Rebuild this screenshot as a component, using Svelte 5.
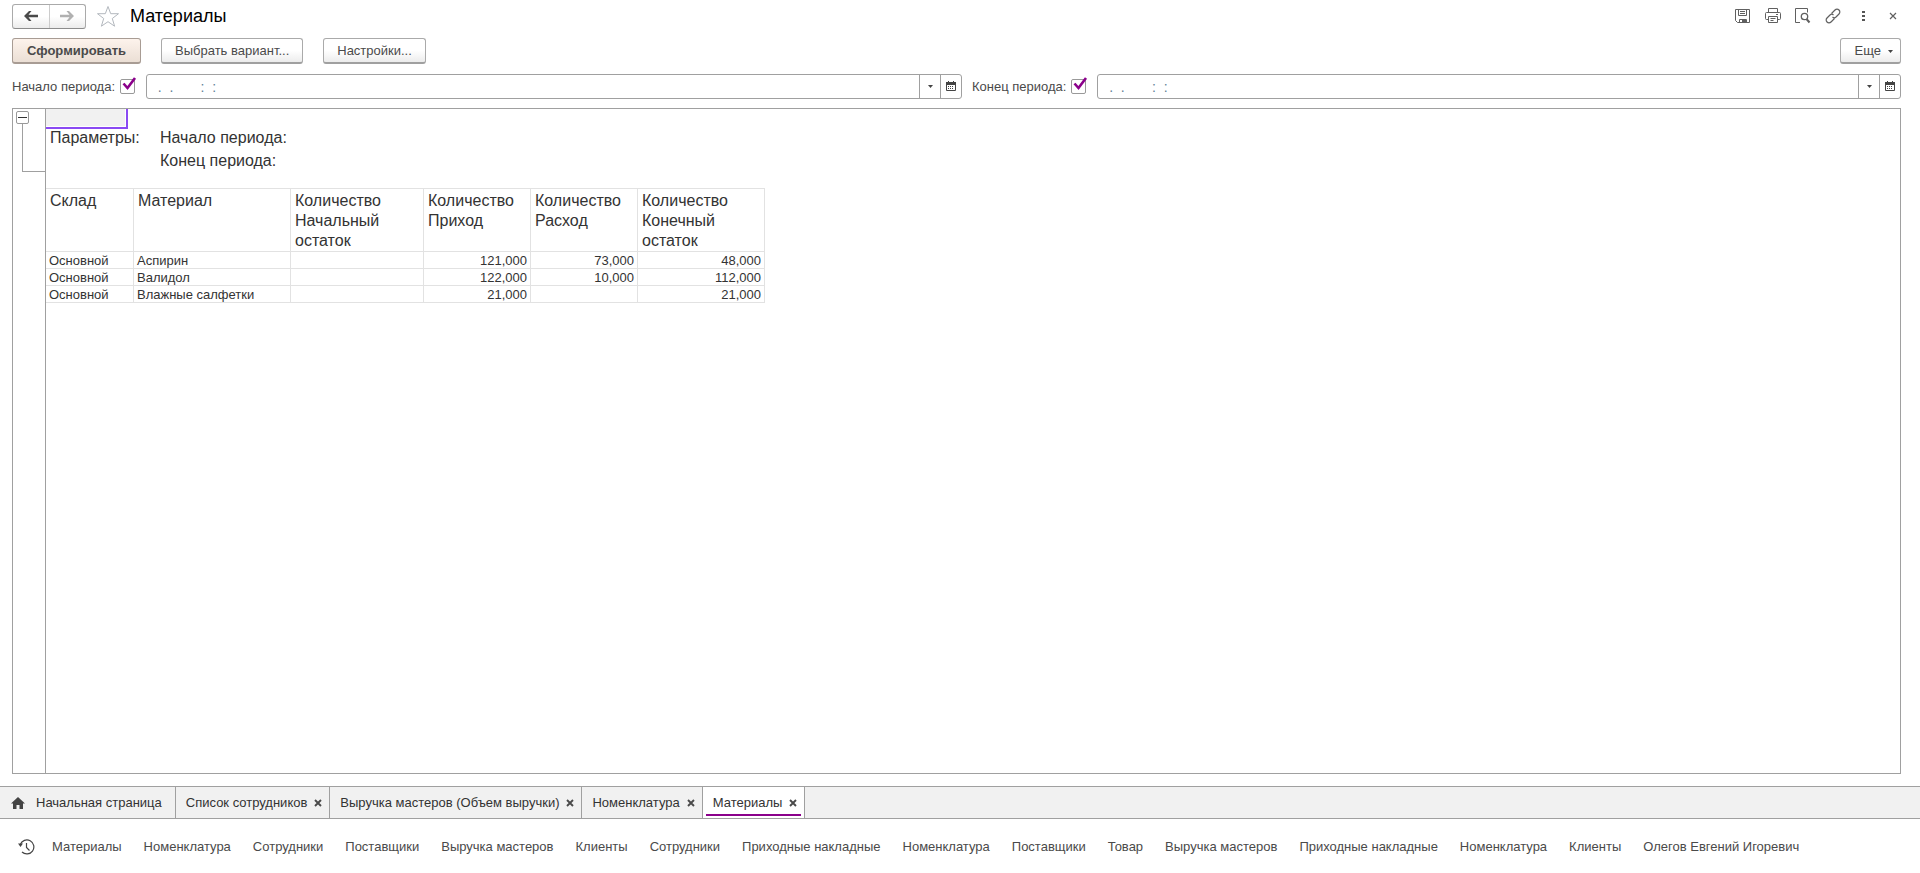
<script>
  const rows = [
    ['Основной', 'Аспирин', '', '121,000', '73,000', '48,000'],
    ['Основной', 'Валидол', '', '122,000', '10,000', '112,000'],
    ['Основной', 'Влажные салфетки', '', '21,000', '', '21,000']
  ];
  const heads = [
    ['Склад'],
    ['Материал'],
    ['Количество', 'Начальный', 'остаток'],
    ['Количество', 'Приход'],
    ['Количество', 'Расход'],
    ['Количество', 'Конечный', 'остаток']
  ];
  const tabs = ['Список сотрудников', 'Выручка мастеров (Объем выручки)', 'Номенклатура', 'Материалы'];
  const active = 'Материалы';
  const history = [
    'Материалы', 'Номенклатура', 'Сотрудники', 'Поставщики', 'Выручка мастеров', 'Клиенты',
    'Сотрудники', 'Приходные накладные', 'Номенклатура', 'Поставщики', 'Товар', 'Выручка мастеров',
    'Приходные накладные', 'Номенклатура', 'Клиенты', 'Олегов Евгений Игоревич'
  ];
  const emptyDate = '  .  .       :  :  ';
  const periods = [
    { id: 'start', label: 'Начало периода:' },
    { id: 'end', label: 'Конец периода:' }
  ];
</script>

<div class="page">
  <header class="titlebar">
    <div class="nav">
      <button aria-label="Назад">
        <svg width="14" height="10" viewBox="0 0 14 10"><path d="M0 5l5-5h2.500L4.500 3.700H14v2.600H4.500L7.500 10H5z" fill="#4a4a4a" /></svg>
      </button>
      <button aria-label="Вперед">
        <svg width="14" height="10" viewBox="0 0 14 10"><path d="M14 5L9 0H6.500l3 3.700H0v2.600h9.500L6.500 10H9z" fill="#b0b0b0" /></svg>
      </button>
    </div>
    <button class="star" aria-label="Избранное">
      <svg width="24" height="23" viewBox="0 0 24 23"><path d="M12 1.500l2.700 7.200h7.800l-6.200 4.800 2.300 7.700L12 16.700l-6.600 4.500 2.300-7.700L1.500 8.700h7.800z" fill="#fff" stroke="#b3b8be" stroke-width="1" /></svg>
    </button>
    <h1>Материалы</h1>
    <div class="tools">
      <button aria-label="Сохранить">
        <svg width="16" height="16" viewBox="0 0 16 16"><path d="M.5 1.500h14v13h-12l-2-2zM3.500 1.500v6h8v-6M5 3.500h5M5 5.500h5M4.500 14.500v-3h7v3" fill="none" stroke="#606060" /><path d="M7 12h4v2H7z" fill="#606060" /></svg>
      </button>
      <button aria-label="Печать">
        <svg width="16" height="16" viewBox="0 0 16 16"><path d="M3.500 4.500v-4h9v4M3.500 11.500h-2a1 1 0 0 1-1-1v-5a1 1 0 0 1 1-1h13a1 1 0 0 1 1 1v5a1 1 0 0 1-1 1h-2M3.500 8.500h9v6h-9zM5.500 10.500h5M5.500 12.500h3M11 6.500h2" fill="none" stroke="#606060" /></svg>
      </button>
      <button aria-label="Просмотр">
        <svg width="16" height="16" viewBox="0 0 16 16"><path d="M5 14.500H.5V.5h12v4" fill="none" stroke="#606060" /><circle cx="9.500" cy="8.500" r="3.200" fill="none" stroke="#606060" stroke-width="1.300" /><path d="M11.500 11l3 3.500" stroke="#606060" stroke-width="2" /></svg>
      </button>
      <button aria-label="Ссылка">
        <svg width="16" height="16" viewBox="0 0 16 16"><path d="M6.500 5.500L10 2a2.600 2.600 0 0 1 4 4l-3 3a2.600 2.600 0 0 1-3.500 0M9.500 10.500L6 14a2.600 2.600 0 0 1-4-4l3-3a2.600 2.600 0 0 1 3.500 0" fill="none" stroke="#606060" stroke-width="1.200" /></svg>
      </button>
      <button aria-label="Меню">
        <svg width="16" height="16" viewBox="0 0 16 16"><path d="M7 3h3v2H7zM7 7h3v2H7zM7 11h3v2H7z" fill="#555" /></svg>
      </button>
      <button aria-label="Закрыть">
        <svg width="16" height="16" viewBox="0 0 16 16"><path d="M5 5l6 6M11 5l-6 6" stroke="#606060" stroke-width="1.200" /></svg>
      </button>
    </div>
  </header>

  <div class="commands">
    <button class="btn main">Сформировать</button>
    <button class="btn">Выбрать вариант...</button>
    <button class="btn">Настройки...</button>
    <button class="btn more">Еще
      <svg width="5" height="3" viewBox="0 0 5 3"><path d="M0 0h5L2.500 3z" fill="#444" /></svg>
    </button>
  </div>

  <div class="periods">
    {#each periods as p}
      <div class="period {p.id}">
        <label for="use-{p.id}">{p.label}</label>
        <span class="tick">
          <input id="use-{p.id}" type="checkbox" checked />
          <svg width="15" height="14" viewBox="0 0 15 14"><path d="M1.500 6.500L5.500 11 13 1" fill="none" stroke="#8b008b" stroke-width="2.600" /></svg>
        </span>
        <div class="date">
          <input type="text" aria-label={p.label} value={emptyDate} />
          <button aria-label="Выбрать из списка">
            <svg width="5" height="3" viewBox="0 0 5 3"><path d="M0 0h5L2.500 3z" fill="#444" /></svg>
          </button>
          <button aria-label="Календарь">
            <svg width="10" height="10" viewBox="0 0 10 10"><path d="M.5 1.500h9v8h-9z" fill="#fff" stroke="#444" /><path d="M0 1h10v3H0zM2 0h1v1H2zM7 0h1v1H7z" fill="#444" /><path d="M2 5.500h6M2 7.500h6" stroke="#444" stroke-dasharray="1 1" /></svg>
          </button>
        </div>
      </div>
    {/each}
  </div>

  <main class="sheet">
    <div class="gutter">
      <button class="fold" aria-label="Свернуть группу"></button>
      <div class="bracket"></div>
    </div>
    <div class="canvas">
      <div class="cell"></div>
      <dl class="params">
        <dt>Параметры:</dt>
        <dd>Начало периода:</dd>
        <dd>Конец периода:</dd>
      </dl>
      <table>
        <colgroup>
          <col class="c1" /><col class="c2" /><col class="c3" /><col class="c4" /><col class="c4" /><col class="c6" />
        </colgroup>
        <thead>
          <tr>
            {#each heads as h}
              <th scope="col">{#each h as line}<span>{line}</span>{/each}</th>
            {/each}
          </tr>
        </thead>
        <tbody>
          {#each rows as r}
            <tr>
              {#each r as v, i}
                <td class:num={i > 1}>{v}</td>
              {/each}
            </tr>
          {/each}
        </tbody>
      </table>
    </div>
  </main>

  <nav class="tabs">
    <button class="tab home">
      <svg width="14" height="12" viewBox="0 0 14 12"><path d="M7 0l7 6.500h-2V12H8.500V8h-3v4H2V6.500H0z" fill="#444" /></svg>
      Начальная страница
    </button>
    {#each tabs as t}
      <div class="tab" class:active={t === active}>
        <button class="name">{t}</button>
        <button class="close" aria-label="Закрыть {t}">
          <svg width="8" height="8" viewBox="0 0 8 8"><path d="M1 1l6 6M7 1L1 7" stroke="#4a4a4a" stroke-width="1.900" /></svg>
        </button>
      </div>
    {/each}
  </nav>

  <footer class="history">
    <svg width="17" height="16" viewBox="0 0 17 16"><path d="M2.300 5.500A7 7 0 1 1 4 13" fill="none" stroke="#444" stroke-width="1.200" /><path d="M0 4.500h5L2.500 8z" fill="#444" /><path d="M8.500 4v4.500l3 3" fill="none" stroke="#444" stroke-width="1.200" /></svg>
    {#each history as h}
      <a href="#top">{h}</a>
    {/each}
  </footer>
</div>

<style>
  :global(body) { margin: 0; background: #fff; }
  .page {
    display: flex;
    flex-direction: column;
    min-height: 100vh;
    font: 13px/16px "Liberation Sans", Arial, sans-serif;
    color: #4a4a4a;
  }
  .page * { box-sizing: border-box; }
  button {
    display: flex;
    align-items: center;
    justify-content: center;
    margin: 0;
    padding: 0;
    border: 0;
    background: none;
    font: inherit;
    color: inherit;
    white-space: nowrap;
  }
  svg { display: block; flex: none; }

  .titlebar {
    display: flex;
    align-items: center;
    height: 32px;
    padding: 0 12px;
  }
  .nav {
    display: flex;
    width: 74px;
    height: 25px;
    border: 1px solid #aaa;
    border-bottom-color: #8c8c8c;
    border-radius: 3px;
    background: linear-gradient(#fff 50%, #ececec);
  }
  .nav button { flex: 1; }
  .nav button + button { border-left: 1px solid #ccc; }
  .star { margin-left: 10px; }
  h1 {
    margin: 0 0 0 10px;
    font-size: 18px;
    line-height: 20px;
    font-weight: 400;
    color: #000;
  }
  .tools { display: flex; margin: 0 0 0 auto; }
  .tools button { width: 30px; height: 24px; }

  .commands {
    display: flex;
    gap: 20px;
    padding: 6px 19px 10px 12px;
  }
  .btn {
    height: 26px;
    padding: 1px 13px 0;
    border: 1px solid #aaa;
    border-bottom: 2px solid #a0a0a0;
    border-radius: 3px;
    background: linear-gradient(#fff 50%, #ececec);
  }
  .main {
    padding: 1px 14px 0;
    border-color: #a89c94;
    background: linear-gradient(#fdf3ec, #ebdfd5);
    font-weight: 700;
  }
  .more { gap: 7px; margin-left: auto; padding: 1px 7px 0 14px; }

  .periods {
    display: flex;
    gap: 10px;
    padding: 0 19px 9px 12px;
  }
  .period { display: flex; align-items: center; }
  .start { flex: 950 1 0; }
  .end { flex: 929 1 0; }
  .tick { display: flex; position: relative; margin: 0 11px 0 5px; }
  .tick input {
    appearance: none;
    width: 15px;
    height: 15px;
    margin: 0;
    border: 1px solid #999;
    border-radius: 2px;
    background: #fff;
  }
  .tick svg { position: absolute; left: 2px; top: -2px; pointer-events: none; }
  .date {
    display: flex;
    flex: 1;
    height: 25px;
    border: 1px solid #a0a0a0;
    border-radius: 3px;
  }
  .date input {
    flex: 1;
    min-width: 0;
    padding: 0 3px;
    border: 0;
    background: none;
    font: inherit;
    font-size: 14px;
    color: #5f7f98;
    outline: none;
  }
  .date button { width: 21px; border-left: 1px solid #a0a0a0; padding-bottom: 1px; }

  .sheet {
    display: flex;
    flex: 1;
    margin: 0 19px 12px 12px;
    border: 1px solid #a0a0a0;
  }
  .gutter { width: 33px; padding: 2px 0 0 3px; border-right: 1px solid #a0a0a0; }
  .fold {
    width: 13px;
    height: 13px;
    border: 1px solid #999;
    border-radius: 2px;
  }
  .fold::before { content: ""; width: 9px; height: 1px; background: #333; }
  .bracket {
    height: 48px;
    margin-left: 6px;
    border: solid #a0a0a0;
    border-width: 0 0 1px 1px;
  }
  .canvas { flex: 1; color: #333; }
  .cell {
    width: 82px;
    height: 20px;
    border: solid #8a4af3;
    border-width: 0 2px 2px 0;
    background: #f1f1f1;
    box-shadow: inset -1px -1px #fff;
  }
  .params {
    display: grid;
    grid-template-columns: 110px max-content;
    row-gap: 5px;
    margin: 0;
    padding: 0 0 18px 4px;
    font-size: 16px;
    line-height: 18px;
  }
  .params dd { grid-column: 2; margin: 0; }
  table {
    width: 719px;
    table-layout: fixed;
    border-spacing: 0;
    border-top: 1px solid #e2e2e2;
  }
  .c1 { width: 88px; }
  .c2 { width: 157px; }
  .c3 { width: 133px; }
  .c4 { width: 107px; }
  .c6 { width: 127px; }
  th, td { border: solid #e2e2e2; border-width: 0 1px 1px 0; text-align: left; white-space: nowrap; }
  th {
    padding: 2px 0 0 4px;
    font-size: 16px;
    line-height: 20px;
    font-weight: 400;
    vertical-align: top;
  }
  th span { display: block; }
  td { height: 17px; padding: 1px 3px 0; line-height: 15px; }
  .num { text-align: right; }

  .tabs {
    display: flex;
    height: 33px;
    border: solid #a0a0a0;
    border-width: 1px 0;
    background: #f1f1f1;
    color: #333;
  }
  .tab {
    display: flex;
    position: relative;
    align-items: center;
    padding: 0 7px 0 10px;
    border-right: 1px solid #a0a0a0;
  }
  .home { gap: 11px; padding: 0 13px 0 11px; }
  .close { margin-left: 7px; }
  .active { background: #fff; }
  .active::after {
    content: "";
    position: absolute;
    left: 3px;
    right: 3px;
    bottom: 2px;
    height: 2px;
    background: #8b008b;
  }

  .history {
    display: flex;
    align-items: center;
    gap: 22px;
    height: 54px;
    padding: 2px 18px 0;
    white-space: nowrap;
  }
  .history svg { margin-right: -5px; }
  .history a { color: inherit; text-decoration: none; }
</style>
